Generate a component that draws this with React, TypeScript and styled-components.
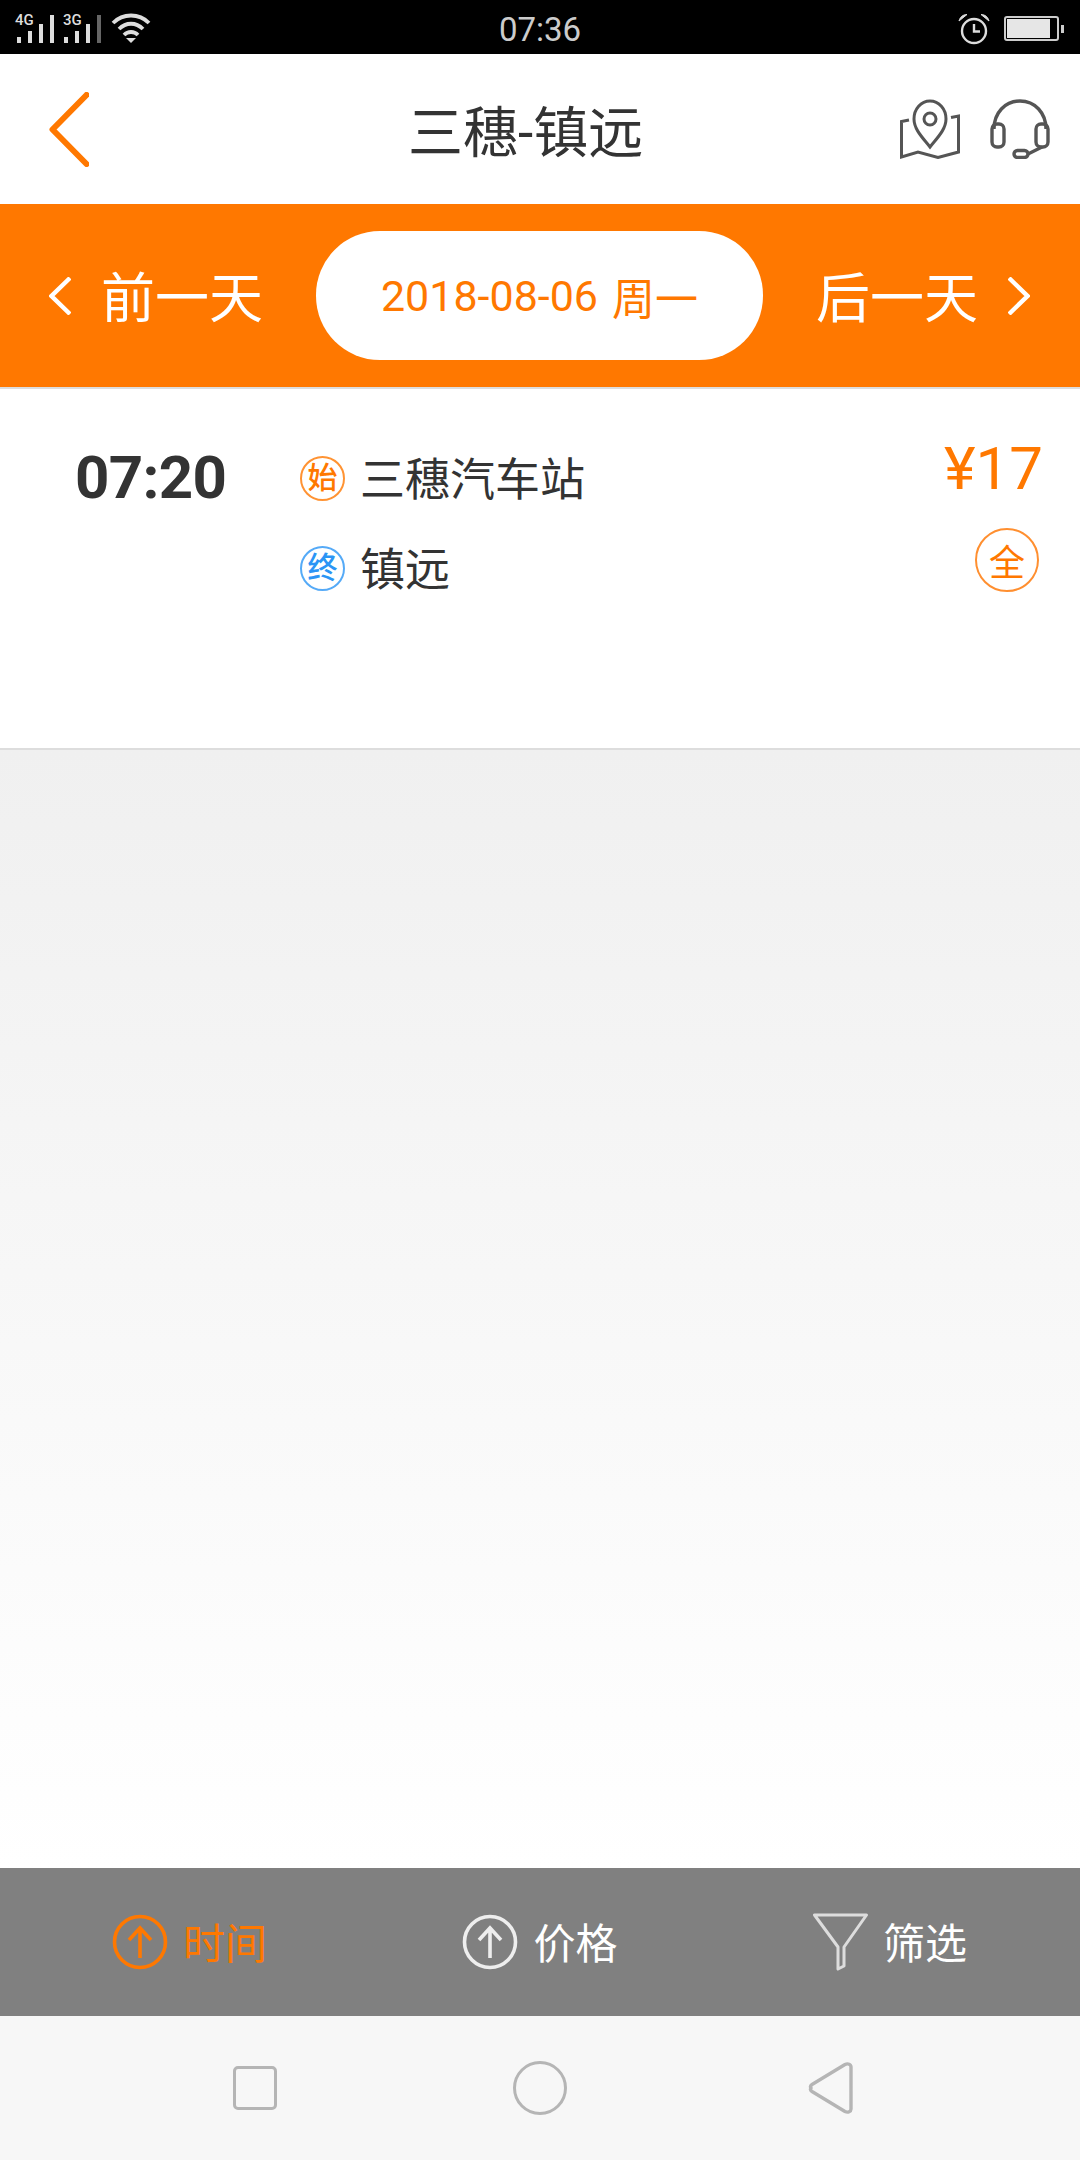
import React from 'react'
import styled, { createGlobalStyle } from 'styled-components'

const ORANGE = '#ff7800'
const FONT = `Roboto, "Noto Sans CJK SC", sans-serif`

const GlobalStyle = createGlobalStyle`
  html, body {
    margin: 0;
    padding: 0;
    background: #fff;
  }
  body {
    font-family: ${FONT};
  }
`

const App = () => {
  return (
    <Page>
      <GlobalStyle />
      <StatusBar>
        <StatusLeft>
          <svg width="170" height="54" viewBox="0 0 170 54">
            <SignalLabel x="15" y="23">4G</SignalLabel>
            <rect x="17" y="35" width="4" height="6" fill="#ddd" />
            <rect x="28" y="29" width="4" height="12" fill="#ddd" />
            <rect x="39" y="22" width="4" height="19" fill="#ddd" />
            <rect x="50" y="13" width="4" height="28" fill="#ddd" />
            <SignalLabel x="63" y="23">3G</SignalLabel>
            <rect x="64" y="35" width="4" height="6" fill="#ddd" />
            <rect x="75" y="29" width="4" height="12" fill="#ddd" />
            <rect x="86" y="22" width="4" height="19" fill="#ddd" />
            <rect x="97" y="13" width="4" height="28" fill="#666" />
            <g fill="none" stroke="#ddd" strokeWidth="3.8">
              <path d="M113 21 C123 11 139 11 149 21" />
              <path d="M119 27 C126 20 136 20 143 27" />
              <path d="M124 33 C128 29 134 29 138 33" />
            </g>
            <path d="M126 36 L136 36 L131 41 Z" fill="#ddd" />
          </svg>
        </StatusLeft>
        <StatusTime>07:36</StatusTime>
        <StatusRight>
          <svg width="32" height="32" viewBox="0 0 32 32" fill="none" stroke="#ddd">
            <circle cx="16" cy="18" r="12" strokeWidth="2.4" />
            <path d="M16 11 V18.5 H22" strokeWidth="2.4" />
            <path d="M1 8 C2 4 5 1.5 9 1.5 Z" fill="#ddd" strokeWidth="1" />
            <path d="M31 8 C30 4 27 1.5 23 1.5 Z" fill="#ddd" strokeWidth="1" />
          </svg>
          <Battery>
            <BatteryFill />
          </Battery>
        </StatusRight>
      </StatusBar>

      <Header>
        <BackIcon width="40" height="75" viewBox="0 0 40 75">
          <path d="M37.5 3 L3.5 37.5 L37.5 72" fill="none" stroke={ORANGE} strokeWidth="6" strokeLinecap="round" strokeLinejoin="round" />
        </BackIcon>
        <Title>三穗-镇远</Title>
        <HeaderIcons>
          <svg width="60" height="60" viewBox="0 0 60 60" fill="none" stroke="#555" strokeWidth="3">
            <path d="M30 48 C24 40 14 31 14 20 C14 10 21 2 30 2 C39 2 46 10 46 20 C46 31 36 40 30 48 Z" />
            <circle cx="30" cy="20" r="6" />
            <path d="M9 21 L1.5 22.5 V58 L18 53 L38 58.5 L58.5 53 V17 L51 18.5" />
          </svg>
          <svg width="60" height="60" viewBox="0 0 60 60" fill="none" stroke="#555" strokeWidth="3.4">
            <path d="M4 30 C4 14 15 2 30 2 C45 2 56 14 56 30" />
            <rect x="2" y="25" width="12" height="23" rx="5" />
            <rect x="46" y="25" width="12" height="23" rx="5" />
            <path d="M52 48 L38 55" />
            <rect x="24" y="51.5" width="14" height="7" rx="3.5" />
          </svg>
        </HeaderIcons>
      </Header>

      <DateBar>
        <DayLink>
          <SmallChevron width="22" height="38" viewBox="0 0 22 38">
            <path d="M21 1 L2.5 19 L21 37" />
          </SmallChevron>
          <DayLabel>前一天</DayLabel>
        </DayLink>
        <DatePill>
          <span>2018-08-06</span>
          <span>周一</span>
        </DatePill>
        <DayLink>
          <DayLabel>后一天</DayLabel>
          <SmallChevron width="22" height="38" viewBox="0 0 22 38">
            <path d="M1 1 L19.5 19 L1 37" />
          </SmallChevron>
        </DayLink>
      </DateBar>

      <TripCard>
        <DepartTime>07:20</DepartTime>
        <Stations>
          <StationRow>
            <StationBadge $color={ORANGE}>始</StationBadge>
            <StationName>三穗汽车站</StationName>
          </StationRow>
          <StationRow>
            <StationBadge $color="#2b95f5">终</StationBadge>
            <StationName>镇远</StationName>
          </StationRow>
        </Stations>
        <PriceColumn>
          <Price>¥17</Price>
          <FareBadge>全</FareBadge>
        </PriceColumn>
      </TripCard>

      <EmptyArea />

      <SortBar>
        <SortItem $active>
          <ArrowCircle color={ORANGE} />
          <SortLabel>时间</SortLabel>
        </SortItem>
        <SortItem>
          <ArrowCircle color="#eee" />
          <SortLabel>价格</SortLabel>
        </SortItem>
        <SortItem>
          <svg width="55" height="58" viewBox="0 0 55 58" fill="none" stroke="#ddd" strokeWidth="3" strokeLinejoin="round">
            <path d="M1.5 2 H53.5 L31 34 V53 L25 56 V34 Z" />
          </svg>
          <SortLabel>筛选</SortLabel>
        </SortItem>
      </SortBar>

      <NavBar>
        <NavSquare />
        <NavCircle />
        <NavBack width="45" height="52" viewBox="0 0 45 52" fill="none" stroke="#b5b5b5" strokeWidth="3.4" strokeLinejoin="round">
          <path d="M3 26 C2 24.5 2.5 23.5 4 22.5 L37 2.5 C40 1 43 2.5 43 5 V47 C43 49.5 40 51 37 49.5 L4 29.5 C2.5 28.5 2 27.5 3 26 Z" />
        </NavBack>
      </NavBar>
    </Page>
  )
}

const ArrowCircle = ({ color }: { color: string }) => (
  <svg width="56" height="56" viewBox="0 0 56 56" fill="none" stroke={color} strokeWidth="3.6">
    <circle cx="28" cy="28" r="25.5" />
    <path d="M28 44 V14 M17 26 L28 14 L39 26" />
  </svg>
)

export default App

const Page = styled.div`
  width: 1080px;
  height: 2160px;
  display: flex;
  flex-direction: column;
  overflow: hidden;
  background: #fff;
`

const StatusBar = styled.div`
  height: 54px;
  flex: none;
  background: #000;
  display: grid;
  grid-template-columns: 1fr auto 1fr;
  align-items: center;
`

const StatusLeft = styled.div`
  display: flex;
  align-items: center;
`

const SignalLabel = styled.text`
  font-family: Roboto, sans-serif;
  font-size: 15px;
  font-weight: 500;
  fill: #ddd;
`

const StatusTime = styled.div`
  font-size: 33px;
  color: #ccc;
  line-height: 54px;
  padding-top: 3px;
`

const StatusRight = styled.div`
  display: flex;
  align-items: center;
  justify-content: flex-end;
  gap: 14px;
  padding-right: 21px;
`

const Battery = styled.div`
  position: relative;
  width: 55px;
  height: 25px;
  box-sizing: border-box;
  border: 2px solid #ccc;
  border-radius: 3px;
  padding: 1px;
  display: flex;

  &::after {
    content: '';
    position: absolute;
    right: -7px;
    top: 7px;
    width: 3px;
    height: 8px;
    background: #ccc;
  }
`

const BatteryFill = styled.div`
  width: 43px;
  background: #e6e6e6;
`

const Header = styled.header`
  height: 150px;
  flex: none;
  display: flex;
  align-items: center;
  background: #fff;
  padding: 0 30px 0 49px;
`

const BackIcon = styled.svg`
  flex: none;
`

const Title = styled.h1`
  margin: 0 0 2px 319px;
  font-size: 55px;
  font-weight: 400;
  color: #333;
  white-space: nowrap;
`

const HeaderIcons = styled.div`
  margin-left: auto;
  display: flex;
  align-items: center;
  gap: 30px;
`

const DateBar = styled.div`
  height: 183px;
  flex: none;
  box-sizing: content-box;
  border-bottom: 2px solid #ddd;
  background: ${ORANGE};
  display: flex;
  align-items: center;
  justify-content: space-between;
  padding: 0 50px 0 49px;
`

const DayLink = styled.div`
  display: flex;
  align-items: center;
  gap: 30px;
`

const DayLabel = styled.span`
  font-size: 54px;
  color: #fff;
  white-space: nowrap;
  margin-bottom: 2px;
`

const SmallChevron = styled.svg`
  flex: none;

  path {
    fill: none;
    stroke: #fff;
    stroke-width: 4.4;
  }
`

const DatePill = styled.div`
  width: 447px;
  height: 129px;
  border-radius: 64px;
  background: #fff;
  color: ${ORANGE};
  font-size: 43px;
  display: flex;
  align-items: center;
  justify-content: center;
  gap: 14px;
  white-space: nowrap;
`

const TripCard = styled.div`
  height: 361px;
  flex: none;
  box-sizing: border-box;
  border-bottom: 2px solid #ddd;
  background: #fff;
  display: flex;
  align-items: flex-start;
  padding: 0 37px 0 75px;
`

const DepartTime = styled.div`
  width: 225px;
  font-size: 60px;
  font-weight: 700;
  letter-spacing: -0.7px;
  color: #333;
  line-height: 70px;
  margin-top: 54px;
`

const Stations = styled.div`
  display: flex;
  flex-direction: column;
  gap: 30px;
  margin-top: 59px;
`

const StationRow = styled.div`
  display: flex;
  align-items: center;
  gap: 15px;
  height: 60px;
`

const StationBadge = styled.span<{ $color: string }>`
  width: 45px;
  height: 45px;
  flex: none;
  box-sizing: border-box;
  border: 2px solid ${p => p.$color}cc;
  border-radius: 50%;
  color: ${p => p.$color};
  font-size: 30px;
  font-weight: 500;
  line-height: 1;
  display: flex;
  align-items: center;
  justify-content: center;
`

const StationName = styled.span`
  font-size: 45px;
  color: #333;
  white-space: nowrap;
  margin-bottom: 4px;
`

const PriceColumn = styled.div`
  margin-left: auto;
  display: flex;
  flex-direction: column;
  align-items: flex-end;
`

const Price = styled.div`
  font-size: 60px;
  color: ${ORANGE};
  line-height: 70px;
  margin-top: 45px;
`

const FareBadge = styled.span`
  width: 64px;
  height: 64px;
  box-sizing: border-box;
  border: 2px solid #ff8f30;
  border-radius: 50%;
  color: ${ORANGE};
  font-size: 36px;
  display: flex;
  align-items: center;
  justify-content: center;
  margin: 24px 4px 0 0;
`

const EmptyArea = styled.div`
  flex: 1;
  background: linear-gradient(#f0f0f0, #fff);
`

const SortBar = styled.div`
  height: 148px;
  flex: none;
  background: #808080;
  display: flex;
  align-items: center;
  justify-content: space-between;
  padding: 0 113px 0 112px;
`

const SortItem = styled.div<{ $active?: boolean }>`
  display: flex;
  align-items: center;
  gap: 15px;
  color: ${p => (p.$active ? ORANGE : '#fff')};
`

const SortLabel = styled.span`
  font-size: 42px;
  white-space: nowrap;
  margin-bottom: 4px;
`

const NavBar = styled.nav`
  height: 144px;
  flex: none;
  background: #f7f7f7;
  display: flex;
  align-items: center;
  gap: 236px;
  padding-left: 233px;
`

const NavSquare = styled.div`
  width: 44px;
  height: 44px;
  box-sizing: border-box;
  border: 3px solid #b5b5b5;
  border-radius: 5px;
`

const NavCircle = styled.div`
  width: 54px;
  height: 54px;
  box-sizing: border-box;
  border: 3px solid #b5b5b5;
  border-radius: 50%;
`

const NavBack = styled.svg`
  margin-left: 5px;
`
